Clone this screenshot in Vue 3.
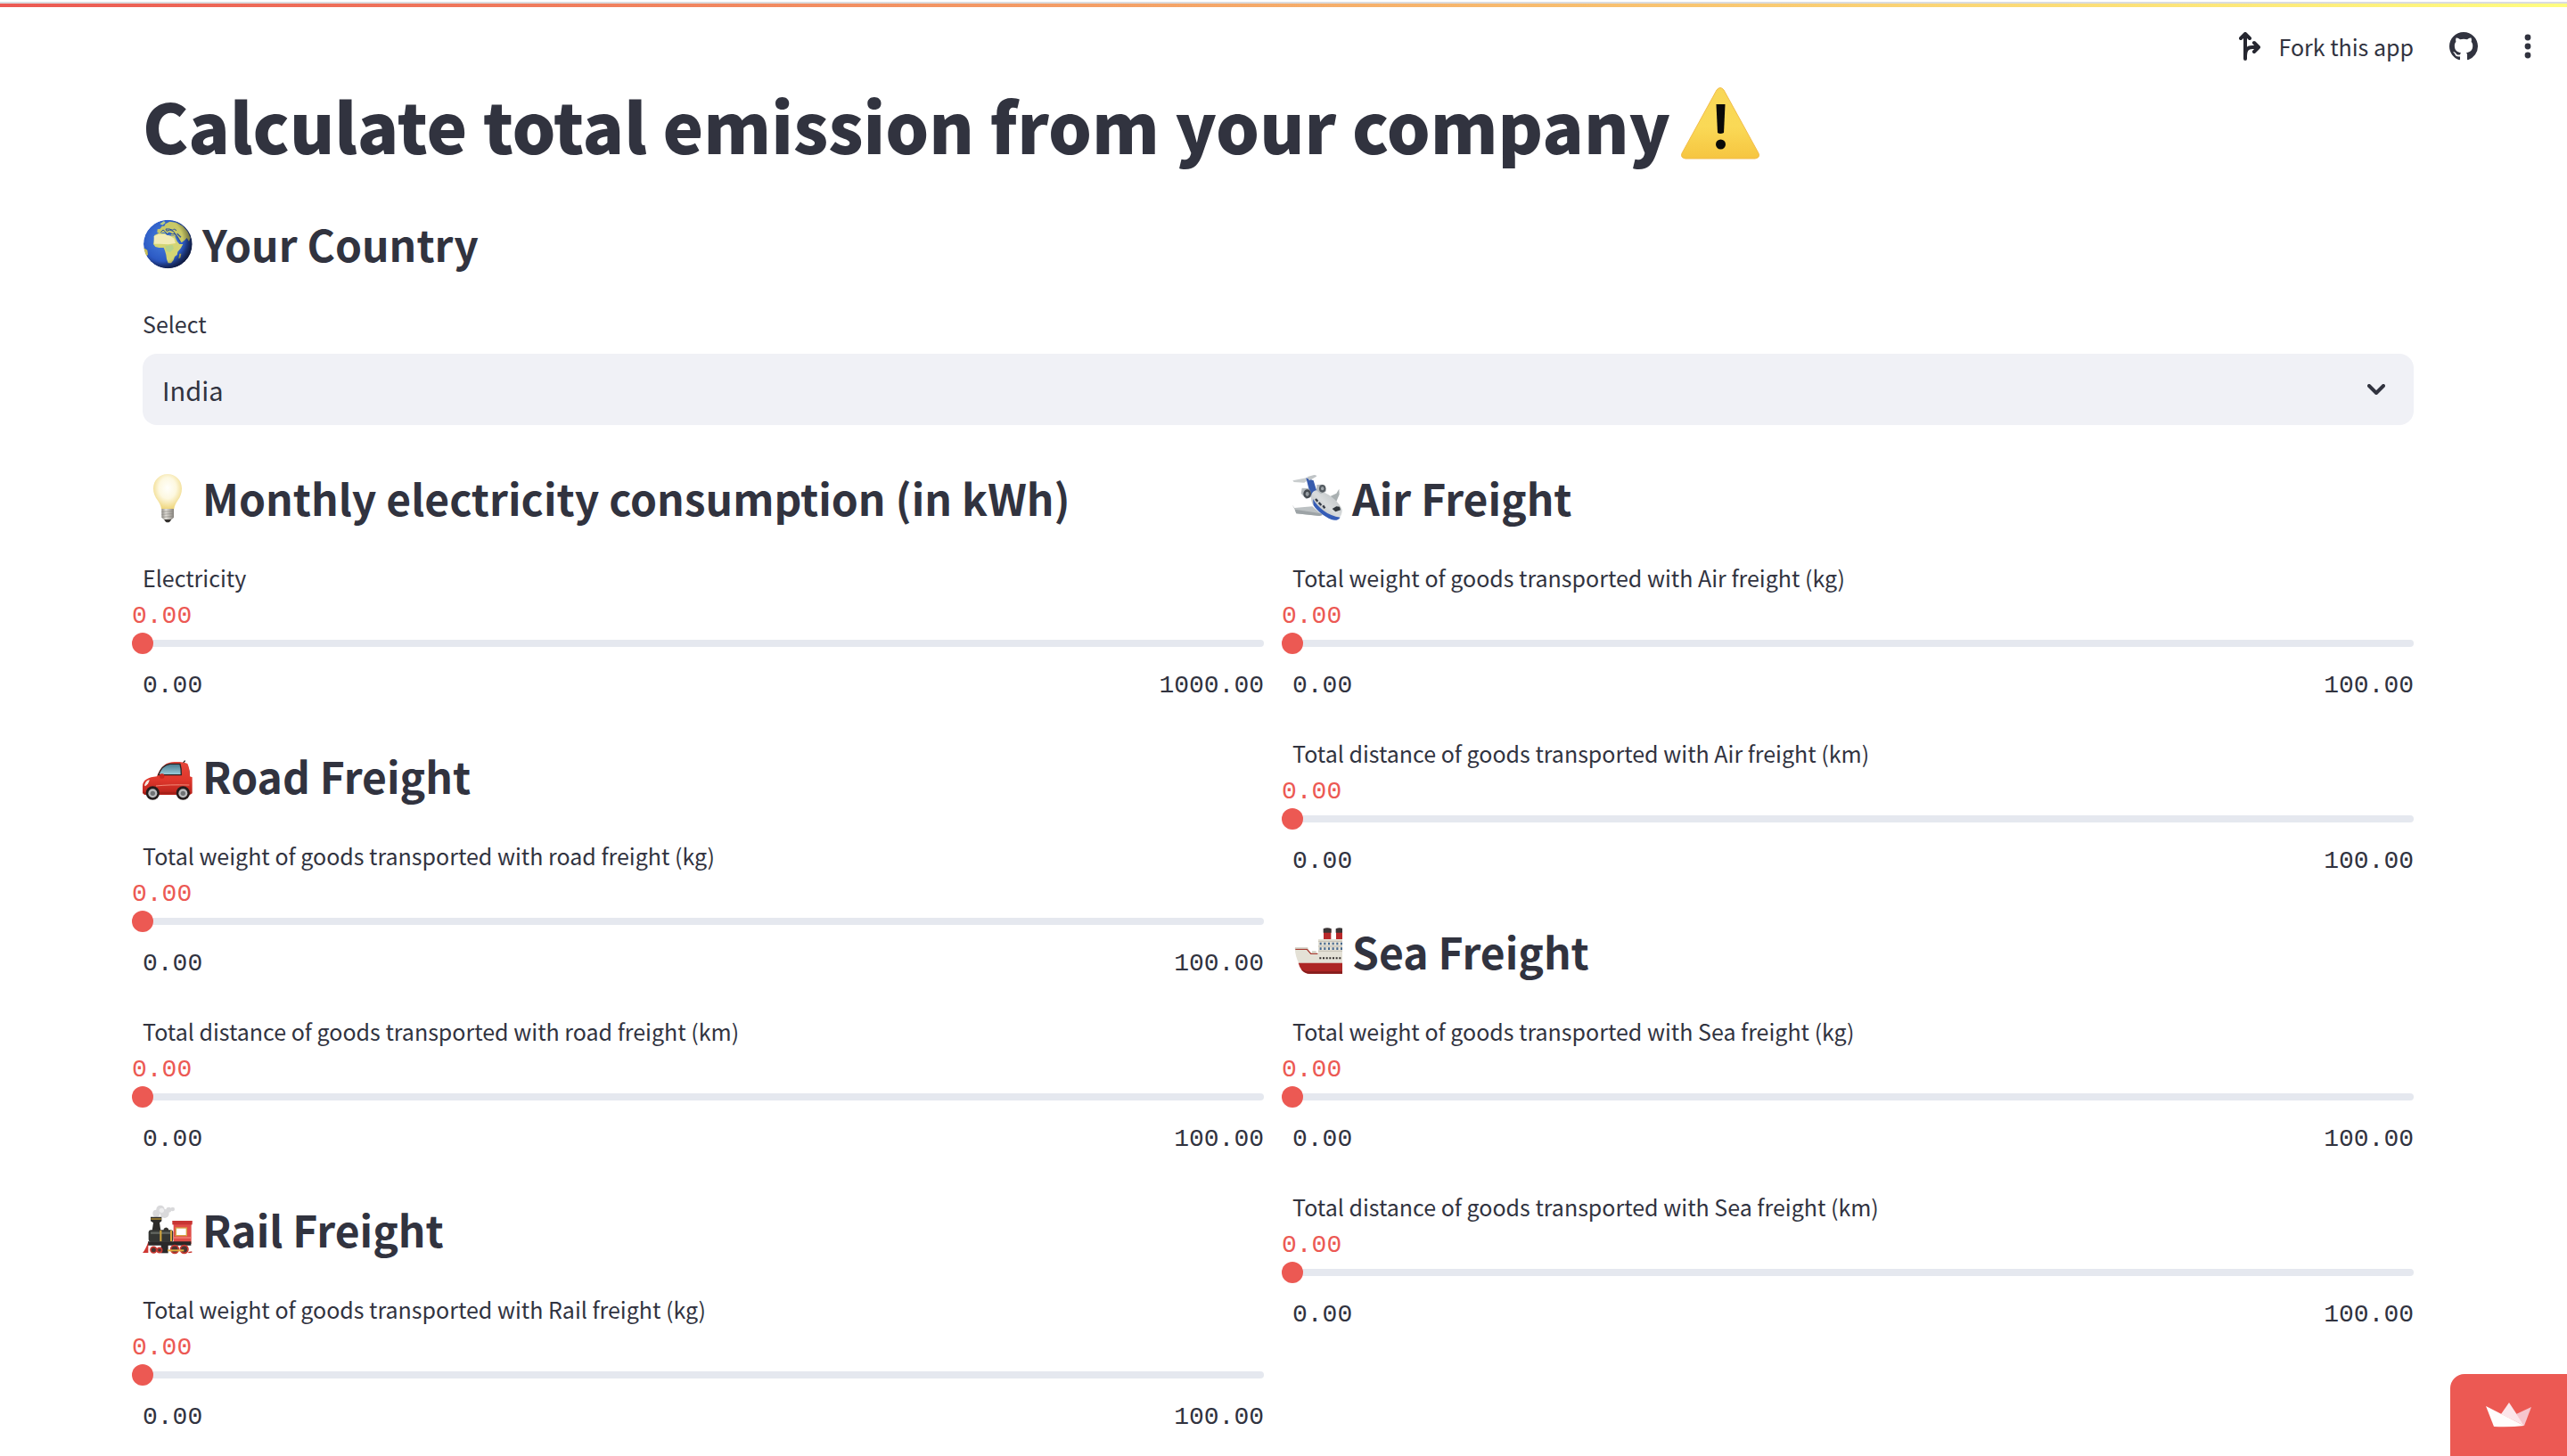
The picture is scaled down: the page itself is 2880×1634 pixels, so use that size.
<template>
  <div class="app">
    <header class="app-header">
      <div class="toolbar">
        <button type="button" class="toolbar-btn">
          <svg class="fork-icon" viewBox="0 0 24 32" aria-hidden="true">
            <path d="M7 30V3M2 7l5-5 5 5M7 28c0-8 2-11 8-11h7M17 12l5 5-5 5" />
          </svg>
          <span>Fork this app</span>
        </button>
        <button type="button" class="toolbar-btn" aria-label="View source on GitHub">
          <svg class="toolbar-icon" viewBox="0 0 16 16" aria-hidden="true">
            <path d="M8 0C3.58 0 0 3.58 0 8c0 3.54 2.29 6.53 5.47 7.59.4.07.55-.17.55-.38 0-.19-.01-.82-.01-1.49-2.01.37-2.53-.49-2.69-.94-.09-.23-.48-.94-.82-1.13-.28-.15-.68-.52-.01-.53.63-.01 1.08.58 1.23.82.72 1.21 1.87.87 2.33.66.07-.52.28-.87.51-1.07-1.78-.2-3.64-.89-3.64-3.95 0-.87.31-1.59.82-2.15-.08-.2-.36-1.02.08-2.12 0 0 .67-.21 2.2.82.64-.18 1.32-.27 2-.27s1.36.09 2 .27c1.53-1.04 2.2-.82 2.2-.82.44 1.1.16 1.92.08 2.12.51.56.82 1.27.82 2.15 0 3.07-1.87 3.75-3.65 3.95.29.25.54.73.54 1.48 0 1.07-.01 1.93-.01 2.2 0 .21.15.46.55.38A8.01 8.01 0 0 0 16 8c0-4.42-3.58-8-8-8z" />
          </svg>
        </button>
        <button type="button" class="toolbar-btn" aria-label="Main menu">
          <svg class="toolbar-icon" viewBox="0 0 32 32" aria-hidden="true">
            <circle cx="16" cy="6" r="3.4" />
            <circle cx="16" cy="16" r="3.4" />
            <circle cx="16" cy="26" r="3.4" />
          </svg>
        </button>
      </div>
    </header>

    <main class="content">
      <h1 class="page-title">
        <span>Calculate total emission from your company</span>
        <svg class="title-icon" viewBox="0 -2 88 88" aria-hidden="true">
          <defs>
            <linearGradient id="warn" x1="0" y1="0" x2="0" y2="1">
              <stop offset="0" stop-color="#f8d757" />
              <stop offset=".55" stop-color="#fad956" />
              <stop offset="1" stop-color="#f6c540" />
            </linearGradient>
          </defs>
          <path d="M40 3q4-5 8 0l39 71q2 5-4 6H5q-6-1-4-6z" fill="url(#warn)" stroke="#f3bd4a" stroke-width="1" />
          <path d="M39.500 19h10l-1.500 32q-4 2-7 0z" fill="#0a0a08" />
          <circle cx="44.500" cy="64" r="5.500" fill="#0a0a08" />
        </svg>
      </h1>

      <h3 class="section-title">
        <svg class="emoji" viewBox="30 18 168 168" aria-hidden="true">
          <defs>
            <radialGradient id="sea" cx=".42" cy=".4" r=".62">
              <stop offset="0" stop-color="#4a83e0" />
              <stop offset=".7" stop-color="#2c5ac4" />
              <stop offset="1" stop-color="#1b2f77" />
            </radialGradient>
            <radialGradient id="shade" cx=".36" cy=".42" r=".68">
              <stop offset=".65" stop-color="#000" stop-opacity="0" />
              <stop offset="1" stop-color="#0a1020" stop-opacity=".7" />
            </radialGradient>
            <clipPath id="globe"><circle cx="115" cy="102" r="82" /></clipPath>
          </defs>
          <g clip-path="url(#globe)">
            <circle cx="115" cy="102" r="82" fill="url(#sea)" />
            <path d="M70 72l12-6 24 0 6 6 14 2 12 0 8 18 8 10 12 0-8 14-10 12-2 10-8 6-4 12-8 10-10 0-5-14-2-14-4-14-4-10-16 0-12-3-7-9 2-12z" fill="#d4d574" />
            <path d="M68 75l16-7 20 1 20 6 12 8 5 16-24 4-30-2-18 0z" fill="#f2ebb5" />
            <path d="M106 108l25-3 4 12-12 12-13-3z" fill="#b7d38a" />
            <path d="M79 62l1-10 9-2 6-8 8-1 4-7 14-8 22 3 22 12 16 18 10 22-5 12-7-12-8 8-10 8-15-20-12-4-9 0 2-8-8-4-6 5-8-4-9 1-8 4z" fill="#c9c967" />
            <path d="M91 62l8-8 8 7 5 8 10-3 9 2 8 0-5-9-12-5-11 4-3-7 12 0 12 4 4-4 8 5" fill="none" stroke="#294f9f" stroke-width="3" />
            <path d="M138 66l10 13 8 14M146 67l13 12" fill="none" stroke="#31539d" stroke-width="4" />
            <path d="M154 134l6 0-3 14-6 3z" fill="#c9bf58" />
            <path d="M33 114l13 8 2 15-9 10z" fill="#c9bf58" />
            <path d="M88 34l14-10 5 6-10 8z" fill="#b6cc84" />
            <circle cx="115" cy="102" r="82" fill="url(#shade)" />
          </g>
        </svg>
        <span>Your Country</span>
      </h3>

      <div class="select-field">
        <label for="country" class="field-label">Select</label>
        <div class="select-box">
          <select id="country" v-model="country">
            <option v-for="name in countries" :key="name" :value="name">{{ name }}</option>
          </select>
          <svg class="chevron" viewBox="0 0 20 12" aria-hidden="true">
            <path d="M2 2l8 8 8-8" />
          </svg>
        </div>
      </div>

      <div class="columns">
        <div v-for="(column, index) in columns" :key="index" class="column">
          <template v-for="section in column" :key="section.title">
            <h3 class="section-title">
              <svg v-if="section.icon === 'bulb'" class="emoji" viewBox="30 30 168 168" aria-hidden="true">
                <defs>
                  <radialGradient id="glass" cx=".5" cy=".4" r=".6">
                    <stop offset="0" stop-color="#fffffb" />
                    <stop offset=".5" stop-color="#fdf8e0" />
                    <stop offset="1" stop-color="#efd67c" />
                  </radialGradient>
                  <linearGradient id="cap" x1="0" x2="1" y1="0" y2="0">
                    <stop offset="0" stop-color="#8f8c86" />
                    <stop offset=".35" stop-color="#e2dfd9" />
                    <stop offset="1" stop-color="#85817b" />
                  </linearGradient>
                </defs>
                <path d="M114 33c-27 0-48 21-48 49 0 16 6 28 14 39 8 12 12 20 13 30h43c1-10 5-18 13-30 8-11 13-23 13-39 0-28-21-49-48-49z" fill="url(#glass)" />
                <path d="M94 150h41v29l-7 7h-27l-7-7z" fill="url(#cap)" />
                <path d="M94 160l41-2M94 169l41-3M95 178l40-3" stroke="#8c8983" stroke-width="2" />
                <path d="M102 186h25l-6 8q-7 3-13 0z" fill="#35322f" />
              </svg>
              <svg v-else-if="section.icon === 'car'" class="emoji" viewBox="30 36 168 168" aria-hidden="true">
                <defs>
                  <linearGradient id="paint" x1="0" y1="0" x2="0" y2="1">
                    <stop offset="0" stop-color="#e5473a" />
                    <stop offset=".55" stop-color="#df372c" />
                    <stop offset="1" stop-color="#b7221b" />
                  </linearGradient>
                  <linearGradient id="window" x1="0" y1="0" x2="0" y2="1">
                    <stop offset="0" stop-color="#47788b" />
                    <stop offset="1" stop-color="#9ccfdd" />
                  </linearGradient>
                </defs>
                <path d="M166 76l6-7" stroke="#2b2b2b" stroke-width="4" stroke-linecap="round" />
                <path d="M180 80l9 25v20h-10z" fill="#4d7f92" />
                <path d="M78 121c10-24 23-45 50-48 20-2 38-1 53 5 6 12 8 27 8 43l8 3v54l-8 5H36l-6-7v-22c0-21 20-31 48-33z" fill="url(#paint)" />
                <path d="M83 116c6-18 19-34 39-37h34q5 17 4 37z" fill="url(#window)" stroke="#2c2525" stroke-width="4" />
                <rect x="87" y="112" width="16" height="16" rx="6" fill="#c9281f" />
                <path d="M36 151q4-16 17-19-2 14-14 22z" fill="#f4ece4" />
                <path d="M75 153q45-5 112-3" fill="none" stroke="#f28a78" stroke-width="3" />
                <path d="M32 173h160v7H32z" fill="#a72019" />
                <circle cx="64" cy="177" r="23" fill="#241c1c" />
                <circle cx="166" cy="177" r="23" fill="#241c1c" />
                <circle cx="64" cy="178" r="15" fill="#b9bbbd" />
                <circle cx="166" cy="178" r="15" fill="#b9bbbd" />
                <circle cx="64" cy="178" r="8" fill="#6f7274" />
                <circle cx="166" cy="178" r="8" fill="#6f7274" />
              </svg>
              <svg v-else-if="section.icon === 'train'" class="emoji" viewBox="30 27 168 168" aria-hidden="true">
                <g fill="#d9d9db">
                  <circle cx="76" cy="56" r="12" />
                  <circle cx="90" cy="43" r="14" />
                  <circle cx="104" cy="57" r="15" />
                  <circle cx="118" cy="44" r="9" />
                  <circle cx="131" cy="42" r="7" />
                </g>
                <circle cx="94" cy="46" r="8" fill="#eeeeef" />
                <path d="M57 68h37v14l-7 6 4 27H62l4-27-9-6z" fill="#2c2b29" />
                <path d="M58 75h35" stroke="#b99335" stroke-width="4" />
                <path d="M101 116v-8q8-9 16 0v8z" fill="#35332f" />
                <rect x="50" y="112" width="83" height="40" rx="9" fill="#343633" />
                <path d="M57 122h68" stroke="#626660" stroke-width="7" />
                <path d="M91 113v38M126 113v38" stroke="#d6a83c" stroke-width="6" />
                <path d="M131 82h66l-3 15v62h-60V97z" fill="#e04d48" />
                <path d="M130 81h67v13h-67z" fill="#c83533" />
                <rect x="142" y="105" width="36" height="26" fill="#fff" stroke="#d5a044" stroke-width="4" />
                <path d="M133 138h60" stroke="#f07a70" stroke-width="5" />
                <path d="M48 151h145v13H48z" fill="#2a2727" />
                <path d="M49 152v37H30q10-12 19-37z" fill="#cf3833" />
                <path d="M92 154h24v36H92z" fill="#292829" />
                <g fill="#4a3532" stroke="#c93730" stroke-width="5">
                  <circle cx="67" cy="179" r="10" />
                  <circle cx="87" cy="180" r="8" />
                  <circle cx="138" cy="177" r="13" />
                  <circle cx="170" cy="177" r="13" />
                </g>
                <path d="M114 181h55" stroke="#e0ae3e" stroke-width="6" />
                <path d="M184 188l12-2" stroke="#c93730" stroke-width="4" />
              </svg>
              <svg v-else-if="section.icon === 'plane'" class="emoji" viewBox="30 30 168 168" aria-hidden="true">
                <defs>
                  <linearGradient id="hull" x1="0" y1="1" x2="1" y2="0">
                    <stop offset="0" stop-color="#a3a8aa" />
                    <stop offset=".5" stop-color="#d9dcdd" />
                    <stop offset="1" stop-color="#b3b9bb" />
                  </linearGradient>
                </defs>
                <path d="M157 108l21-10 9-15 1 19-12 28z" fill="#a9b0b1" />
                <path d="M29 136l8 11 60-5 34 29-10 3-78-8-5-13z" fill="#bcc1c3" />
                <path d="M38 152l5 14 78 8 10-3-4-5z" fill="#9da3a6" />
                <path d="M31 55l46-9 8 5-15 11-35-2z" fill="#c9cdce" />
                <path d="M76 46l25 9 13 42-7 26-15-13z" fill="#385cad" />
                <path d="M79 43l24-7q10 1 8 5l-24 14z" fill="#bfc4c6" />
                <path d="M100 92q12-10 32 0c31 14 57 38 65 60 1 20-9 35-29 34-20-5-50-27-67-47-9-15-12-36-1-47z" fill="url(#hull)" />
                <path d="M99 117c17 29 50 57 92 62-5 9-18 12-30 7-23-9-48-29-60-48z" fill="#365db7" />
                <path d="M164 150l14-8 11 1 3 11-17 6z" fill="#30363b" />
                <path d="M108 117l7 8M119 129l8 9M133 139l6 9" stroke="#343a46" stroke-width="7" />
                <path d="M112 69l20-1q16 9 10 25l-16 7-15-12z" fill="#b5babd" />
                <ellipse cx="131" cy="82" rx="11" ry="13" fill="#535a60" />
                <ellipse cx="131" cy="82" rx="5" ry="6" fill="#a0a6aa" />
                <path d="M62 80l21 1q15 12 8 31l-15 5-17-19z" fill="#b5babd" />
                <ellipse cx="80" cy="100" rx="13" ry="15" fill="#444a51" />
                <ellipse cx="80" cy="100" rx="6" ry="8" fill="#969ca1" />
              </svg>
              <svg v-else class="emoji" viewBox="30 27 168 168" aria-hidden="true">
                <path d="M135 35h25v40h-25zM177 35h21v40h-21z" fill="#b8282a" />
                <path d="M134 34q13-6 27 0v13h-27zM176 34q10-5 22-2v15h-22z" fill="#3b3536" />
                <path d="M117 69h81v50h-81z" fill="#e3e0d5" />
                <path d="M117 76h81M117 93h81M117 109h81" stroke="#c3beb3" stroke-width="3" />
                <path d="M122 84h76M122 101h76" stroke="#45678e" stroke-width="8" stroke-dasharray="6 8" />
                <path d="M38 98h43l12 18h105v35H52Q40 128 38 98z" fill="#e4e1d6" />
                <path d="M40 103h39l13 15h23" fill="none" stroke="#a93b32" stroke-width="4" />
                <path d="M39 99h43" stroke="#c9c5ba" stroke-width="4" />
                <path d="M96 116v-7h14v7z" fill="#d0ccbe" />
                <path d="M121 133h77" stroke="#302c2b" stroke-width="6" stroke-dasharray="6 5" />
                <path d="M50 149h148v36H80Q58 179 50 149z" fill="#ad2625" />
                <path d="M60 171q10 12 26 14h112v-7H78z" fill="#841c1c" />
              </svg>
              <span>{{ section.title }}</span>
            </h3>

            <div v-for="slider in section.sliders" :key="slider.id" class="slider-field">
              <label :for="slider.id" class="field-label">{{ slider.label }}</label>
              <div class="slider-value">
                <output :for="slider.id" :style="{ marginLeft: thumbOffset(slider) }">{{ format(slider.value) }}</output>
              </div>
              <div class="slider-track">
                <input
                  :id="slider.id"
                  v-model.number="slider.value"
                  type="range"
                  min="0"
                  :max="slider.max"
                  step="0.01"
                />
              </div>
              <div class="slider-range">
                <span>{{ format(0) }}</span>
                <span>{{ format(slider.max) }}</span>
              </div>
            </div>
          </template>
        </div>
      </div>
    </main>

    <a href="#" class="hosted-badge" aria-label="Hosted with Streamlit">
      <svg class="crown" viewBox="0 0 52 28" aria-hidden="true">
        <path d="M34 13l17-8-8 21z" fill="#f6c5cd" />
        <path d="M17 13l9-13 17 26z" fill="#fce6ea" />
        <path d="M0 4l43 22q-17 2-34 1z" fill="#fffdfc" />
      </svg>
    </a>
  </div>
</template>

<script setup>
import { reactive, ref } from 'vue'

const countries = ['India']
const country = ref('India')

function createSlider(id, label, max = 100) {
  return { id, label, max, value: 0 }
}

const columns = reactive([
  [
    {
      title: 'Monthly electricity consumption (in kWh)',
      icon: 'bulb',
      sliders: [createSlider('electricity', 'Electricity', 1000)]
    },
    {
      title: 'Road Freight',
      icon: 'car',
      sliders: [
        createSlider('road-weight', 'Total weight of goods transported with road freight (kg)'),
        createSlider('road-distance', 'Total distance of goods transported with road freight (km)')
      ]
    },
    {
      title: 'Rail Freight',
      icon: 'train',
      sliders: [createSlider('rail-weight', 'Total weight of goods transported with Rail freight (kg)')]
    }
  ],
  [
    {
      title: 'Air Freight',
      icon: 'plane',
      sliders: [
        createSlider('air-weight', 'Total weight of goods transported with Air freight (kg)'),
        createSlider('air-distance', 'Total distance of goods transported with Air freight (km)')
      ]
    },
    {
      title: 'Sea Freight',
      icon: 'ship',
      sliders: [
        createSlider('sea-weight', 'Total weight of goods transported with Sea freight (kg)'),
        createSlider('sea-distance', 'Total distance of goods transported with Sea freight (km)')
      ]
    }
  ]
])

function format(value) {
  return Number(value).toFixed(2)
}

// keeps the value label inside the track at both ends
function thumbOffset(slider) {
  const percent = (slider.value / slider.max) * 100
  return `min(${percent}%, calc(100% - 120px))`
}
</script>

<style>
body {
  margin: 0;
  background: #fff;
}
</style>

<style scoped>
.app {
  min-height: 100vh;
  color: #31333f;
  font-family: 'Noto Sans CJK SC', 'Open Sans', sans-serif;
  font-size: 25px;
}

.app-header {
  padding-top: 2px;
}

.app-header::before {
  content: '';
  display: block;
  height: 4px;
  border-top: 2px solid #dadce0;
  background: linear-gradient(90deg, #ec5953, #fffd80);
}

.toolbar {
  display: flex;
  justify-content: flex-end;
  align-items: center;
  gap: 40px;
  height: 88px;
  padding-right: 28px;
}

.toolbar-btn {
  display: flex;
  align-items: center;
  gap: 20px;
  padding: 0;
  border: none;
  background: none;
  color: inherit;
  font: inherit;
  line-height: 40px;
  cursor: pointer;
}

.toolbar-icon {
  width: 32px;
  height: 32px;
  fill: currentColor;
}

.fork-icon {
  width: 24px;
  height: 32px;
  fill: none;
  stroke: #262730;
  stroke-width: 4;
  stroke-linecap: round;
  stroke-linejoin: round;
}

.content {
  padding: 0 172px 16px 160px;
}

.page-title {
  display: flex;
  align-items: center;
  gap: 12px;
  margin: 0;
  font-size: 77px;
  font-weight: 900;
  line-height: 88px;
}

.title-icon {
  flex: none;
  width: 88px;
  height: 88px;
}

.section-title {
  display: flex;
  align-items: center;
  gap: 11px;
  margin: 0;
  padding-top: 16px;
  font-size: 48px;
  font-weight: 600;
  line-height: 67px;
}

.page-title + .section-title {
  margin-top: 40px;
}

.emoji {
  flex: none;
  width: 56px;
  height: 56px;
}

.field-label {
  display: block;
  line-height: 48px;
}

.select-field {
  margin: 32px 0;
}

.select-box {
  display: grid;
  align-items: center;
  margin-top: 10px;
}

.select-box select,
.chevron {
  grid-area: 1 / 1;
}

.select-box select {
  width: 100%;
  height: 80px;
  padding: 0 64px 0 22px;
  border: none;
  border-radius: 16px;
  background: #f0f1f6;
  color: inherit;
  font: inherit;
  font-size: 29px;
  appearance: none;
}

.chevron {
  justify-self: end;
  width: 20px;
  height: 12px;
  margin-right: 32px;
  fill: none;
  stroke: currentColor;
  stroke-width: 4;
  stroke-linecap: round;
  stroke-linejoin: round;
  pointer-events: none;
}

.columns {
  display: grid;
  grid-template-columns: 1fr 1fr;
  gap: 32px;
}

.column {
  display: flex;
  flex-direction: column;
  gap: 32px;
}

.slider-field {
  display: flex;
  flex-direction: column;
  height: 165px;
}

.slider-value {
  margin: 4px -12px 0;
  color: #ec5953;
}

.slider-value output {
  display: block;
}

.slider-value,
.slider-range {
  font-family: 'Liberation Mono', monospace;
  font-size: 28px;
  line-height: 32px;
}

.slider-track {
  display: flex;
  align-items: center;
  height: 8px;
  margin-top: 10px;
  border-radius: 4px;
  background: #e5e8ef;
}

.slider-track input {
  flex: 1;
  height: 24px;
  margin: -8px -12px;
  background: transparent;
  appearance: none;
  cursor: pointer;
}

.slider-track input::-webkit-slider-thumb {
  width: 24px;
  height: 24px;
  border: none;
  border-radius: 50%;
  background: #ec5953;
  appearance: none;
}

.slider-track input::-moz-range-thumb {
  width: 24px;
  height: 24px;
  border: none;
  border-radius: 50%;
  background: #ec5953;
}

.slider-range {
  display: flex;
  justify-content: space-between;
  margin-top: 28px;
}

.hosted-badge {
  position: fixed;
  right: 0;
  bottom: 0;
  display: flex;
  align-items: center;
  justify-content: center;
  box-sizing: border-box;
  width: 131px;
  height: 92px;
  border-top-left-radius: 16px;
  background: #ec5953;
}

.crown {
  width: 52px;
  height: 28px;
}
</style>
